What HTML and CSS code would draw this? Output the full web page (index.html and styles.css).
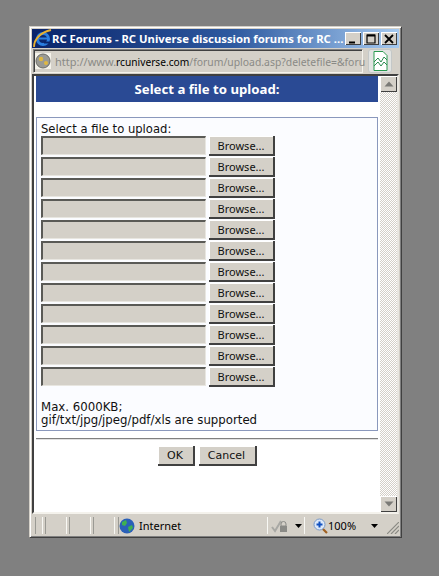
FILE: index.html
```html
<!DOCTYPE html>
<html lang="en">
<head>
<meta charset="utf-8">
<title>RC Forums</title>
<link rel="stylesheet" href="styles.css">
</head>
<body>
<div class="window">
  <div class="titlebar">
    <svg class="ie" width="19" height="19" viewBox="0 0 19 19"><circle cx="10" cy="10" r="5.500" fill="none" stroke="#2a7ee0" stroke-width="3"/><path d="M5 9.500h10.500" stroke="#2a7ee0" stroke-width="2"/><path d="M11 13.500h6" stroke="#0a246a" stroke-width="2"/><path d="M1 18C1 10 8 3 18 1" fill="none" stroke="#e8b030" stroke-width="1.800"/></svg>
    <span class="title">RC Forums - RC Universe discussion forums for RC ...</span>
    <div class="winbtns">
      <span class="winbtn"><svg width="14" height="12" viewBox="0 0 14 12"><path d="M3 9.500h6" stroke="#000" stroke-width="2"/></svg></span>
      <span class="winbtn"><svg width="14" height="12" viewBox="0 0 14 12"><path d="M3 2h8v8H3z" fill="none" stroke="#000" stroke-width="1.200"/><path d="M3 2.500h8" stroke="#000" stroke-width="2"/></svg></span>
      <span class="winbtn"><svg width="14" height="12" viewBox="0 0 14 12"><path d="M3 2l8 8M11 2l-8 8" stroke="#000" stroke-width="1.800"/></svg></span>
    </div>
  </div>
  <div class="addressrow">
    <div class="address">
      <svg class="favicon" width="16" height="16" viewBox="0 0 16 16"><rect width="16" height="16" fill="#f4f2ea"/><circle cx="8" cy="8" r="7" fill="#9a9a94" stroke="#6c6c68"/><circle cx="6" cy="6" r="2.200" fill="#e0b840"/><circle cx="11" cy="10" r="2" fill="#e0b840"/></svg>
      <span class="url"><span class="url-dim">http://www.</span><span class="url-host">rcuniverse.com</span><span class="url-dim url-path">/forum/upload.asp?deletefile=&amp;foru</span></span>
    </div>
    <div class="feed">
      <svg width="18" height="22" viewBox="0 0 18 22"><path d="M3 1.500h9l4 4v15H3z" fill="#fff" stroke="#2a9a50"/><path d="M3 12l4-4 3 4 3-5 3 3M3 16l4-4 3 4 3-4 3 3" fill="none" stroke="#2a8a50"/></svg>
    </div>
  </div>
  <div class="viewport">
    <div class="page">
      <h1 class="heading">Select a file to upload:</h1>
      <div class="box">
        <div class="label">Select a file to upload:</div>
        <div class="rows">
          <div class="row"><span class="field"></span><span class="btn browse">Browse...</span></div>
          <div class="row"><span class="field"></span><span class="btn browse">Browse...</span></div>
          <div class="row"><span class="field"></span><span class="btn browse">Browse...</span></div>
          <div class="row"><span class="field"></span><span class="btn browse">Browse...</span></div>
          <div class="row"><span class="field"></span><span class="btn browse">Browse...</span></div>
          <div class="row"><span class="field"></span><span class="btn browse">Browse...</span></div>
          <div class="row"><span class="field"></span><span class="btn browse">Browse...</span></div>
          <div class="row"><span class="field"></span><span class="btn browse">Browse...</span></div>
          <div class="row"><span class="field"></span><span class="btn browse">Browse...</span></div>
          <div class="row"><span class="field"></span><span class="btn browse">Browse...</span></div>
          <div class="row"><span class="field"></span><span class="btn browse">Browse...</span></div>
          <div class="row"><span class="field"></span><span class="btn browse">Browse...</span></div>
        </div>
        <p class="note">Max. 6000KB;<br>gif/txt/jpg/jpeg/pdf/xls are supported</p>
      </div>
      <div class="rule"></div>
      <div class="actions"><span class="btn ok">OK</span><span class="btn cancel">Cancel</span></div>
    </div>
    <div class="scrollbar">
      <span class="arrow"><svg width="10" height="6" viewBox="0 0 10 6"><path d="M5 0.500L9.500 5.500H0.500z" fill="#7a7a76"/></svg></span>
      <span class="arrow"><svg width="10" height="6" viewBox="0 0 10 6"><path d="M5 5.500L9.500 0.500H0.500z" fill="#7a7a76"/></svg></span>
    </div>
  </div>
  <div class="statusbar">
    <span class="cell cell-a"></span><span class="cell cell-b"></span><span class="cell cell-b"></span><span class="cell cell-b"></span>
    <span class="zone">
      <svg width="16" height="16" viewBox="0 0 16 16"><circle cx="8" cy="8" r="7.500" fill="#2a60b8"/><path d="M3 4l4-2 1 3-2 3-3-1zM9 9l4-2 1 3-4 4z" fill="#3fb050"/></svg>
      <span>Internet</span>
    </span>
    <span class="lock">
      <svg width="18" height="16" viewBox="0 0 18 16"><path d="M1 9l3 4 6-10" fill="none" stroke="#a8a8a4" stroke-width="2"/><path d="M10 6a2.500 2.500 0 0 1 5 0v2h-5z" fill="none" stroke="#8a8a86"/><rect x="9" y="8" width="7" height="6" fill="#8a8a86"/></svg>
      <svg width="7" height="4" viewBox="0 0 7 4"><path d="M0 0h7L3.500 4z" fill="#000"/></svg>
    </span>
    <span class="zoom">
      <svg width="15" height="16" viewBox="0 0 15 16"><path d="M9 10l5 5" stroke="#a06020" stroke-width="2.200"/><circle cx="6.500" cy="6.500" r="5.500" fill="#dce8f8" stroke="#7a9ac8"/><path d="M6.500 3.500v6M3.500 6.500h6" stroke="#1050c0" stroke-width="2"/></svg>
      <span>100%</span>
      <svg class="zoom-caret" width="7" height="4" viewBox="0 0 7 4"><path d="M0 0h7L3.500 4z" fill="#000"/></svg>
    </span>
    <svg class="grip" width="12" height="12" viewBox="0 0 12 12"><path d="M0 12L12 0M4 12l8-8M8 12l4-4" stroke="#8a8a84" stroke-width="1.200"/></svg>
  </div>
</div>
</body>
</html>
```
FILE: styles.css
```css
html, body { margin: 0; padding: 0; }
body {
  width: 439px;
  height: 576px;
  background: #808080;
  font-family: "DejaVu Sans", Verdana, sans-serif;
  overflow: hidden;
  padding: 26px 0 0 29px;
  box-sizing: border-box;
}
.window {
  width: 373px;
  height: 512px;
  box-sizing: border-box;
  background: #d4d0c8;
  border: 1px solid #d4d0c8;
  border-right-color: #404040;
  border-bottom-color: #404040;
  box-shadow: inset 1px 1px 0 #fff, inset -1px -1px 0 #808080;
  padding: 2px;
  display: flex;
  flex-direction: column;
}
.titlebar {
  height: 19px;
  flex: none;
  display: flex;
  align-items: center;
  background: linear-gradient(90deg, #0a246a 0%, #2e5aa0 55%, #a6caf0 100%);
  color: #fff;
  padding-left: 1px;
}
.ie { flex: none; }
.title {
  font-family: "Noto Sans", Tahoma, sans-serif;
  font-weight: bold;
  font-size: 11.300px;
  white-space: nowrap;
  flex: 1;
}
.winbtns { display: flex; flex: none; gap: 2px; margin-right: 2px; }
.winbtn {
  width: 16px;
  height: 13px;
  background: #d4d0c8;
  box-shadow: inset 1px 1px 0 #fff, inset -1px -1px 0 #404040;
  display: flex;
  align-items: center;
  justify-content: center;
}
.addressrow {
  height: 26px;
  flex: none;
  display: flex;
  align-items: center;
  box-sizing: border-box;
}
.address {
  width: 330px;
  height: 24px;
  margin-left: 1px;
  box-sizing: border-box;
  border: 1px solid #808080;
  border-right-color: #f4f2ec;
  border-bottom-color: #f4f2ec;
  box-shadow: inset 1px 1px 0 #404040;
  display: flex;
  align-items: center;
  padding-left: 1px;
}
.favicon { flex: none; }
.url {
  font-family: "Noto Sans", Tahoma, sans-serif;
  font-size: 11px;
  white-space: nowrap;
  margin-left: 4px;
}
.url-dim { color: #8a8a86; }
.url-host { color: #000; font-size: 10.200px; }
.url-path { font-size: 10.400px; }
.feed {
  width: 24px;
  height: 24px;
  margin-left: 5px;
  background: #e2e4e2;
  border: 1px solid #c4c8c8;
  border-radius: 3px;
  display: flex;
  align-items: center;
  justify-content: center;
  box-sizing: border-box;
}
.viewport {
  height: 440px;
  flex: none;
  display: flex;
  border: 2px solid #808080;
  border-right-color: #e8e6e0;
  border-bottom-color: #f4f2ec;
  border-top-color: #404040;
  border-left-color: #404040;
  box-sizing: border-box;
  background: #fff;
}
.page {
  flex: 1;
  min-width: 0;
  padding: 0 2px;
  box-sizing: border-box;
}
.heading {
  margin: 0;
  height: 26px;
  background: #2a4a94;
  color: #fff;
  font-family: "Noto Sans", Tahoma, sans-serif;
  font-size: 13.200px;
  font-weight: bold;
  line-height: 27px;
  text-align: center;
}
.box {
  margin-top: 15px;
  height: 314px;
  box-sizing: border-box;
  border: 1px solid #8a98bc;
  background: #fbfcff;
  padding: 5px 0 0 4px;
  font-size: 11.600px;
  color: #101010;
}
.label { line-height: 13px; }
.rows { display: flex; flex-direction: column; gap: 1px; }
.row { display: flex; height: 20px; gap: 3px; }
.field {
  width: 165px;
  height: 19px;
  box-sizing: border-box;
  background: #d4d0c8;
  border-top: 2px solid #5a5a56;
  border-left: 2px solid #5a5a56;
  border-right: 1px solid #e8e6e0;
  border-bottom: 1px solid #e8e6e0;
}
.btn {
  display: flex;
  align-items: center;
  justify-content: center;
  box-sizing: border-box;
  background: #d4d0c8;
  border-right: 2px solid #404040;
  border-bottom: 2px solid #404040;
  box-shadow: inset 1px 1px 0 #fff;
  font-size: 11px;
  color: #101010;
}
.browse {
  width: 66px;
  height: 20px;
  font-family: "Noto Sans", Tahoma, sans-serif;
}
.note { margin: 14px 0 0; line-height: 13px; font-size: 11.750px; }
.rule {
  height: 0;
  margin-top: 7px;
  border-top: 1px solid #808080;
  border-bottom: 1px solid #e0e0e0;
}
.actions {
  display: flex;
  justify-content: center;
  gap: 4px;
  margin-top: 6px;
}
.ok { width: 37px; height: 20px; padding-top: 1px; }
.cancel { width: 58px; height: 20px; padding-top: 1px; }
.scrollbar {
  width: 17px;
  flex: none;
  display: flex;
  flex-direction: column;
  justify-content: space-between;
  background: repeating-conic-gradient(#d4d0c8 0 25%, #fff 0 50%) 0 0 / 2px 2px;
}
.arrow {
  width: 17px;
  height: 16px;
  background: #d4d0c8;
  box-shadow: inset 1px 1px 0 #fff, inset -1px -1px 0 #404040;
  display: flex;
  align-items: center;
  justify-content: center;
}
.statusbar {
  flex: 1;
  display: flex;
  align-items: center;
  font-family: "Noto Sans", Tahoma, sans-serif;
  font-size: 11px;
  color: #000;
  gap: 2px;
  padding-top: 2px;
}
.cell {
  height: 17px;
  box-sizing: border-box;
  border-left: 1px solid #9a9a94;
  border-right: 1px solid #f8f8f4;
}
.cell-a { width: 8px; margin-left: 3px; }
.cell-b { width: 22px; }
.zone {
  width: 150px;
  height: 17px;
  margin-left: 1px;
  display: flex;
  align-items: center;
  gap: 4px;
  box-sizing: border-box;
  border-left: 1px solid #9a9a94;
  border-right: 1px solid #f8f8f4;
}
.lock {
  width: 35px;
  height: 17px;
  display: flex;
  align-items: center;
  gap: 6px;
  padding-left: 1px;
  box-sizing: border-box;
  border-right: 1px solid #f8f8f4;
}
.zoom {
  width: 80px;
  height: 17px;
  display: flex;
  align-items: center;
  padding-left: 6px;
  box-sizing: border-box;
}
.zoom-caret { margin-left: 15px; }
.grip { flex: none; margin-left: -2px; align-self: flex-end; margin-bottom: 1px; }
```
